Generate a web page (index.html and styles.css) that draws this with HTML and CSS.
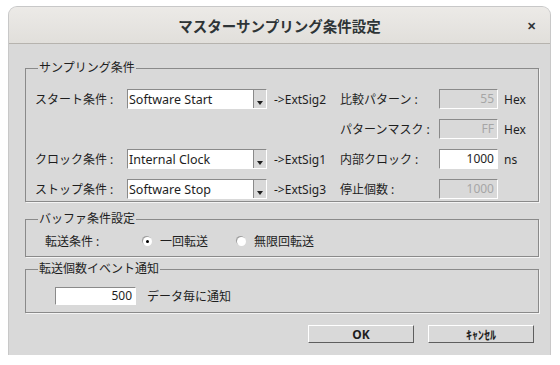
FILE: index.html
```html
<!DOCTYPE html>
<html>

<head>
    <title>マスターサンプリング条件設定</title>
    <link rel="stylesheet" href="styles.css">
</head>

<body>
    <div class="window">
        <div class="title-bar">
            <h1>マスターサンプリング条件設定</h1>
            <span class="close">&#x2715;</span>
        </div>

        <div class="content">
            <fieldset class="group sampling">
                <legend>サンプリング条件</legend>
                <div class="grid">
                    <span class="label">スタート条件 :</span>
                    <div class="combo"><span>Software Start</span><i class="drop"></i></div>
                    <span class="sig">-&gt;ExtSig2</span>
                    <span class="label">比較パターン :</span>
                    <div class="field disabled">55</div>
                    <span class="unit">Hex</span>

                    <span></span>
                    <span></span>
                    <span></span>
                    <span class="label">パターンマスク :</span>
                    <div class="field disabled">FF</div>
                    <span class="unit">Hex</span>

                    <span class="label">クロック条件 :</span>
                    <div class="combo"><span>Internal Clock</span><i class="drop"></i></div>
                    <span class="sig">-&gt;ExtSig1</span>
                    <span class="label">内部クロック :</span>
                    <div class="field">1000</div>
                    <span class="unit">ns</span>

                    <span class="label">ストップ条件 :</span>
                    <div class="combo"><span>Software Stop</span><i class="drop"></i></div>
                    <span class="sig">-&gt;ExtSig3</span>
                    <span class="label">停止個数 :</span>
                    <div class="field disabled">1000</div>
                    <span class="unit"></span>
                </div>
            </fieldset>

            <fieldset class="group buffer">
                <legend>バッファ条件設定</legend>
                <div class="row">
                    <span class="label transfer">転送条件 :</span>
                    <label class="radio checked"><i></i>一回転送</label>
                    <label class="radio"><i></i>無限回転送</label>
                </div>
            </fieldset>

            <fieldset class="group notify">
                <legend>転送個数イベント通知</legend>
                <div class="row">
                    <div class="field count">500</div>
                    <span class="label">データ毎に通知</span>
                </div>
            </fieldset>

            <div class="buttons">
                <button class="btn">OK</button>
                <button class="btn">ｷｬﾝｾﾙ</button>
            </div>
        </div>
    </div>
</body>

</html>
```

FILE: styles.css
```css
/* dialog styles */
body {
    background-color: #ffffff;
    font-family: "Noto Sans", "Noto Sans CJK JP", sans-serif;
    font-size: 12px;
    color: #1e1e1e;
    margin: 0;
    padding: 0;
}

.window {
    margin: 7px 0 0 9px;
    width: 541px;
    height: 348px;
    background-color: #d9d9d9;
    border-radius: 8px 8px 0 0;
    box-shadow: 0 0 0 1px #c8c8c8;
    display: flex;
    flex-direction: column;
}

.title-bar {
    height: 36px;
    display: flex;
    align-items: center;
    justify-content: center;
    position: relative;
    background: linear-gradient(#eceae7, #e1dfdb);
    border-bottom: 1px solid #b6b3ae;
    border-radius: 8px 8px 0 0;
}

.title-bar h1 {
    margin: 0;
    font-size: 14.5px;
    font-weight: bold;
    color: #2e3436;
}

.close {
    position: absolute;
    right: 14px;
    top: 11px;
    font-size: 11px;
    font-weight: bold;
    color: #2e3436;
}

.content {
    padding: 15px 11px 0 16px;
}

.group {
    margin: 0;
    padding: 0 0 0 9px;
    border: 1px solid #8a8a8a;
    box-shadow: 1px 1px 0 #f4f4f4;
}

.group legend {
    padding: 0 1px;
    margin-left: 3px;
    line-height: 18px;
}

.grid {
    display: grid;
    grid-template-columns: 92px 140px 73px 99px 59px auto;
    grid-auto-rows: 20px;
    row-gap: 10px;
    align-items: center;
    padding: 12px 0 2px;
}

.combo {
    height: 20px;
    box-sizing: border-box;
    background-color: #ffffff;
    border: 1px solid #ffffff;
    border-top-color: #8a8a8a;
    border-left-color: #8a8a8a;
    display: flex;
    align-items: center;
    padding-left: 1px;
    font-size: 12.5px;
}

.combo span {
    flex: 1;
}

.drop {
    width: 13px;
    height: 18px;
    box-sizing: border-box;
    background-color: #d9d9d9;
    border-left: 1px solid #8a8a8a;
    position: relative;
}

.drop::after {
    content: "";
    position: absolute;
    left: 3px;
    bottom: 3px;
    border-left: 3px solid transparent;
    border-right: 3px solid transparent;
    border-top: 4px solid #1e1e1e;
}

.sig {
    padding-left: 7px;
}

.field {
    height: 20px;
    box-sizing: border-box;
    background-color: #ffffff;
    border: 1px solid #ffffff;
    border-top-color: #8a8a8a;
    border-left-color: #8a8a8a;
    text-align: right;
    padding-right: 3px;
    line-height: 18px;
}

.field.disabled {
    background-color: #d9d9d9;
    color: #a6a6a6;
}

.unit {
    padding-left: 6px;
}

.buffer {
    margin-top: 8px;
}

.row {
    display: flex;
    align-items: center;
    height: 20px;
    padding: 3px 0 5px;
}

.transfer {
    width: 98px;
    padding-left: 10px;
}

.radio {
    display: flex;
    align-items: center;
    margin-right: 29px;
}

.radio i {
    width: 9px;
    height: 9px;
    border-radius: 50%;
    background-color: #ffffff;
    box-shadow: -1px -1px 0 #a0a0a0;
    margin-right: 8px;
    position: relative;
}

.radio.checked i::after {
    content: "";
    position: absolute;
    left: 3px;
    top: 3px;
    width: 3px;
    height: 3px;
    border-radius: 50%;
    background-color: #000000;
}

.notify {
    margin-top: 3px;
}

.notify .row {
    padding: 9px 0 7px 20px;
    height: 18px;
}

.count {
    width: 81px;
    height: 18px;
    margin-right: 11px;
    line-height: 16px;
}

.buttons {
    display: flex;
    justify-content: flex-end;
    gap: 14px;
    padding: 12px 5px 0 0;
}

.btn {
    width: 106px;
    height: 18px;
    padding: 0;
    background-color: #d9d9d9;
    border: 1px solid #5e5e5e;
    border-top-color: #ffffff;
    border-left-color: #ffffff;
    font-family: "Noto Sans", "Noto Sans CJK JP", sans-serif;
    font-size: 12px;
    font-weight: bold;
    color: #1e1e1e;
}
```
